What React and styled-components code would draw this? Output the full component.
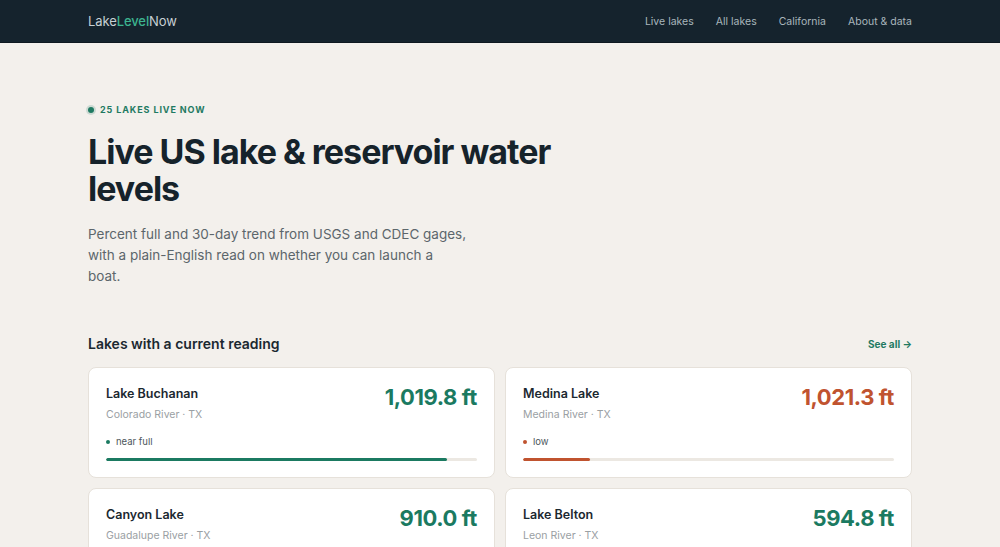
import React from "react";
import styled, { createGlobalStyle } from "styled-components";

const GlobalStyle = createGlobalStyle`
  body {
    margin: 0;
    background: #f3f0ec;
    font-family: Inter, "Noto Sans", "Liberation Sans", sans-serif;
    color: #1b2830;
  }
`;

const Header = styled.header`
  background: #15232d;
  height: 42px;
  border-bottom: 1px solid #0e1920;
`;

const HeaderInner = styled.div`
  width: 824px;
  margin: 0 auto;
  height: 100%;
  display: flex;
  align-items: center;
  justify-content: space-between;
`;

const Logo = styled.div`
  font-size: 13px;
  color: #c7d0d4;
  letter-spacing: -0.1px;
  span {
    color: #3cb38f;
    font-weight: 500;
  }
`;

const Nav = styled.nav`
  display: flex;
  gap: 22px;
  a {
    font-size: 10.5px;
    color: #a9b6bc;
    text-decoration: none;
  }
`;

const Main = styled.main`
  width: 824px;
  margin: 0 auto;
  padding-top: 61px;
`;

const Badge = styled.div`
  display: flex;
  align-items: center;
  gap: 6px;
  font-size: 9px;
  font-weight: 700;
  letter-spacing: 0.9px;
  color: #1f7a62;
  text-transform: uppercase;
`;

const Dot = styled.span`
  width: ${p => p.size || 5}px;
  height: ${p => p.size || 5}px;
  border-radius: 50%;
  background: ${p => p.color};
  box-shadow: ${p => (p.glow ? "0 0 0 2px rgba(31,122,98,0.18)" : "none")};
  flex: none;
`;

const Title = styled.h1`
  margin: 18px 0 0;
  font-size: 34px;
  line-height: 37px;
  font-weight: 700;
  letter-spacing: -1px;
  max-width: 540px;
  color: #16232b;
`;

const Lead = styled.p`
  margin: 17px 0 0;
  font-size: 13.5px;
  line-height: 21px;
  color: #5c666b;
  max-width: 380px;
`;

const SectionHead = styled.div`
  margin-top: 48px;
  display: flex;
  justify-content: space-between;
  align-items: center;
`;

const SectionTitle = styled.h2`
  margin: 0;
  font-size: 14px;
  font-weight: 600;
  color: #1b2830;
`;

const SeeAll = styled.a`
  font-size: 10px;
  font-weight: 700;
  color: #1f7a62;
  text-decoration: none;
`;

const Grid = styled.div`
  margin-top: 15px;
  display: grid;
  grid-template-columns: 1fr 1fr;
  gap: 10px;
`;

const Card = styled.div`
  background: #fff;
  border: 1px solid #e6e1da;
  border-radius: 8px;
  padding: 16px 17px 16px;
`;

const CardTop = styled.div`
  display: flex;
  justify-content: space-between;
  align-items: flex-start;
`;

const Name = styled.div`
  font-size: 12.5px;
  font-weight: 600;
  color: #1b2830;
  margin-top: 2px;
`;

const Sub = styled.div`
  margin-top: 7px;
  font-size: 10.5px;
  color: #9aa0a3;
`;

const Value = styled.div`
  font-size: 22px;
  font-weight: 700;
  letter-spacing: -0.4px;
  color: ${p => p.color};
`;

const Status = styled.div`
  margin-top: 15px;
  display: flex;
  align-items: center;
  gap: 6px;
  font-size: 9.5px;
  color: #4c565b;
`;

const Track = styled.div`
  margin-top: 11px;
  height: 3px;
  border-radius: 2px;
  background: #ece8e2;
  overflow: hidden;
`;

const Fill = styled.div`
  height: 100%;
  border-radius: 2px;
  background: ${p => p.color};
`;

const GREEN = "#1b7a61";
const RED = "#c0532f";

const lakes = [
  { name: "Lake Buchanan", river: "Colorado River · TX", value: "1,019.8 ft", color: GREEN, status: "near full", pct: 92 },
  { name: "Medina Lake", river: "Medina River · TX", value: "1,021.3 ft", color: RED, status: "low", pct: 18 },
  { name: "Canyon Lake", river: "Guadalupe River · TX", value: "910.0 ft", color: GREEN, status: "near full", pct: 95 },
  { name: "Lake Belton", river: "Leon River · TX", value: "594.8 ft", color: GREEN, status: "near full", pct: 94 },
];

export default function App() {
  return (
    <>
      <GlobalStyle />
      <Header>
        <HeaderInner>
          <Logo>
            Lake<span>Level</span>Now
          </Logo>
          <Nav>
            <a href="#">Live lakes</a>
            <a href="#">All lakes</a>
            <a href="#">California</a>
            <a href="#">About &amp; data</a>
          </Nav>
        </HeaderInner>
      </Header>
      <Main>
        <Badge>
          <Dot color="#1f7a62" size={6} glow />
          25 lakes live now
        </Badge>
        <Title>Live US lake &amp; reservoir water levels</Title>
        <Lead>
          Percent full and 30-day trend from USGS and CDEC gages, with a
          plain-English read on whether you can launch a boat.
        </Lead>
        <SectionHead>
          <SectionTitle>Lakes with a current reading</SectionTitle>
          <SeeAll href="#">See all →</SeeAll>
        </SectionHead>
        <Grid>
          {lakes.map(l => (
            <Card key={l.name}>
              <CardTop>
                <div>
                  <Name>{l.name}</Name>
                  <Sub>{l.river}</Sub>
                </div>
                <Value color={l.color}>{l.value}</Value>
              </CardTop>
              <Status>
                <Dot color={l.color} size={4} />
                {l.status}
              </Status>
              <Track>
                <Fill color={l.color} style={{ width: `${l.pct}%` }} />
              </Track>
            </Card>
          ))}
        </Grid>
      </Main>
    </>
  );
}
